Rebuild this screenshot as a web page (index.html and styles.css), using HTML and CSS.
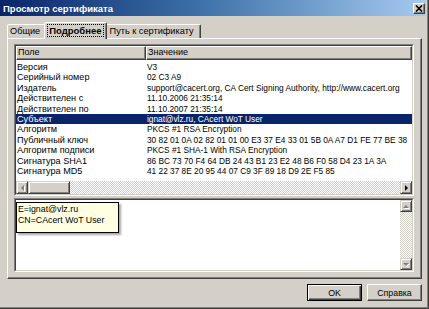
FILE: index.html
```html
<!DOCTYPE html>
<html lang="ru">
<head>
    <meta charset="UTF-8">
    <title>Просмотр сертификата</title>
    <link rel="stylesheet" href="styles.css">
</head>
<body>
    <div class="window">
        <!-- заголовок -->
        <div class="titlebar">
            <span class="title">Просмотр сертификата</span>
            <span class="close">
                <svg width="8" height="7" viewBox="0 0 8 7">
                    <path d="M1 0.5 L7 6.5 M7 0.5 L1 6.5" stroke="#000" stroke-width="1.6" fill="none"/>
                </svg>
            </span>
        </div>

        <div class="content">
            <!-- вкладки -->
            <div class="tabs">
                <div class="tab">Общие</div>
                <div class="tab active"><span class="focus">Подробнее</span></div>
                <div class="tab">Путь к сертификату</div>
            </div>

            <div class="panel">
                <!-- список полей -->
                <div class="sunken listview">
                    <div class="sunken-inner lv-inner">
                        <div class="lv-header">
                            <div class="hcell col1">Поле</div>
                            <div class="hcell col2">Значение</div>
                        </div>
                        <div class="lv-body">
                            <div class="row"><span class="c1">Версия</span><span class="c2">V3</span></div>
                            <div class="row"><span class="c1">Серийный номер</span><span class="c2">02 C3 A9</span></div>
                            <div class="row"><span class="c1">Издатель</span><span class="c2">support@cacert.org, CA Cert Signing Authority, http://www.cacert.org</span></div>
                            <div class="row"><span class="c1">Действителен с</span><span class="c2">11.10.2006 21:35:14</span></div>
                            <div class="row"><span class="c1">Действителен по</span><span class="c2">11.10.2007 21:35:14</span></div>
                            <div class="row selected"><span class="c1">Субъект</span><span class="c2">ignat@vlz.ru, CAcert WoT User</span></div>
                            <div class="row"><span class="c1">Алгоритм</span><span class="c2">PKCS #1 RSA Encryption</span></div>
                            <div class="row"><span class="c1">Публичный ключ</span><span class="c2">30 82 01 0A 02 82 01 01 00 E3 37 E4 33 01 5B 0A A7 D1 FE 77 BE 38</span></div>
                            <div class="row"><span class="c1">Алгоритм подписи</span><span class="c2">PKCS #1 SHA-1 With RSA Encryption</span></div>
                            <div class="row"><span class="c1">Сигнатура SHA1</span><span class="c2">86 BC 73 70 F4 64 DB 24 43 B1 23 E2 48 B6 F0 58 D4 23 1A 3A</span></div>
                            <div class="row"><span class="c1">Сигнатура MD5</span><span class="c2">41 22 37 8E 20 95 44 07 C9 3F 89 18 D9 2E F5 85</span></div>
                        </div>
                        <div class="hscroll">
                            <div class="sb-btn"><span class="arrow left disabled"></span></div>
                            <div class="sb-thumb"></div>
                            <div class="sb-track"></div>
                            <div class="sb-btn"><span class="arrow right"></span></div>
                        </div>
                    </div>
                </div>

                <!-- значение поля -->
                <div class="sunken details">
                    <div class="sunken-inner det-inner">
                        <div class="det-text"></div>
                        <div class="vscroll">
                            <div class="sb-btn"><span class="arrow up disabled"></span></div>
                            <div class="sb-track"></div>
                            <div class="sb-btn"><span class="arrow down disabled"></span></div>
                        </div>
                    </div>
                    <div class="tooltip">E=ignat@vlz.ru<br>CN=CAcert WoT User</div>
                </div>
            </div>

            <!-- кнопки -->
            <div class="buttons">
                <button class="btn default">OK</button>
                <button class="btn">Справка</button>
            </div>
        </div>
    </div>
</body>
</html>
```

FILE: styles.css
```css
/* базовые */
* {
    margin: 0;
    padding: 0;
    box-sizing: border-box;
}

body {
    background: #d4d0c8;
    font-family: "Liberation Sans", Arial, sans-serif;
    font-size: 8.5px;
    color: #000;
}

.window {
    width: 429px;
    height: 309px;
    background: #d4d0c8;
    border-right: 1px solid #404040;
    border-bottom: 1px solid #404040;
    box-shadow: inset -1px -1px 0 #808080;
    padding: 0 2px 2px 0;
    display: flex;
    flex-direction: column;
}

/* заголовок окна */
.titlebar {
    height: 16px;
    background: linear-gradient(to right, #0a246a 0%, #3a6ea5 45%, #a6caf0 100%);
    display: flex;
    align-items: center;
    justify-content: space-between;
    padding: 0 1px 0 3px;
}

.title {
    color: #fff;
    font-weight: bold;
    font-size: 9.5px;
}

.close {
    width: 12px;
    height: 11px;
    background: #d4d0c8;
    border: 1px solid;
    border-color: #fff #404040 #404040 #fff;
    box-shadow: inset -1px -1px 0 #808080;
    display: flex;
    align-items: center;
    justify-content: center;
}

.content {
    flex: 1;
    display: flex;
    flex-direction: column;
    padding: 6px 4px 0 7px;
}

/* вкладки */
.tabs {
    display: flex;
    align-items: flex-end;
    height: 16px;
}

.tab {
    height: 14px;
    padding: 0 5px 0 2px;
    font-size: 9.2px;
    line-height: 12px;
    background: #d4d0c8;
    border: 1px solid;
    border-bottom: none;
    border-color: #fff #404040 transparent #fff;
    border-radius: 2px 2px 0 0;
    box-shadow: inset -1px 0 0 #808080;
    white-space: nowrap;
}

.tab:last-child {
    padding: 0 6px 0 4px;
}

.tab.active {
    position: relative;
    z-index: 1;
    height: 17px;
    margin: 0 -2px -1px;
    padding: 1px 2px 0 2px;
    font-weight: bold;
    font-size: 9.5px;
}

.focus {
    border: 1px dotted #000;
    padding: 0 1px;
    line-height: 11px;
    display: inline-block;
}

.panel {
    height: 241px;
    background: #d4d0c8;
    border: 1px solid;
    border-color: #fff #404040 #404040 #fff;
    box-shadow: inset -1px -1px 0 #808080;
    padding: 5px 7px 0 6px;
    display: flex;
    flex-direction: column;
    gap: 2px;
}

/* утопленные рамки */
.sunken {
    border: 1px solid;
    border-color: #808080 #fff #fff #808080;
    background: #fff;
}

.sunken-inner {
    height: 100%;
    border: 1px solid;
    border-color: #404040 #d4d0c8 #d4d0c8 #404040;
}

.listview {
    height: 152px;
}

.lv-inner {
    display: flex;
    flex-direction: column;
    overflow: hidden;
}

.lv-header {
    display: flex;
    height: 14px;
    flex-shrink: 0;
}

.hcell {
    background: #d4d0c8;
    border: 1px solid;
    border-color: #fff #404040 #404040 #fff;
    box-shadow: inset -1px -1px 0 #808080;
    padding-left: 1px;
    line-height: 11px;
    font-size: 9px;
    white-space: nowrap;
}

.hcell.col1 {
    width: 130px;
}

.hcell.col2 {
    flex: 1;
}

.lv-body {
    flex: 1;
    padding-top: 2px;
    overflow: hidden;
}

.row {
    display: flex;
    height: 10.4px;
    line-height: 10.4px;
    white-space: nowrap;
    overflow: hidden;
}

.row .c1 {
    width: 130px;
    flex-shrink: 0;
    padding-left: 1px;
    font-size: 9.1px;
}

.row .c2 {
    padding-left: 1px;
    font-size: 8.3px;
}

.row.selected {
    background: #0a246a;
    color: #fff;
}

/* полосы прокрутки */
.hscroll {
    height: 13px;
    flex-shrink: 0;
    display: flex;
}

.sb-btn {
    width: 12px;
    height: 13px;
    flex-shrink: 0;
    background: #d4d0c8;
    border: 1px solid;
    border-color: #d4d0c8 #404040 #404040 #d4d0c8;
    box-shadow: inset 1px 1px 0 #fff, inset -1px -1px 0 #808080;
    display: flex;
    align-items: center;
    justify-content: center;
}

.sb-thumb {
    width: 42px;
    background: #d4d0c8;
    border: 1px solid;
    border-color: #d4d0c8 #404040 #404040 #d4d0c8;
    box-shadow: inset 1px 1px 0 #fff, inset -1px -1px 0 #808080;
}

.sb-track {
    flex: 1;
    background-color: #d4d0c8;
    background-image: repeating-conic-gradient(#fff 0 25%, #d4d0c8 0 50%);
    background-size: 2px 2px;
}

.arrow {
    width: 0;
    height: 0;
    border-style: solid;
}

.arrow.left {
    border-width: 3px 3px 3px 0;
    border-color: transparent #000 transparent transparent;
}

.arrow.right {
    border-width: 3px 0 3px 3px;
    border-color: transparent transparent transparent #000;
}

.arrow.up {
    border-width: 0 3px 3px 3px;
    border-color: transparent transparent #000 transparent;
}

.arrow.down {
    border-width: 3px 3px 0 3px;
    border-color: #000 transparent transparent transparent;
}

.arrow.disabled {
    filter: drop-shadow(1px 1px 0 #fff);
}

.arrow.left.disabled { border-right-color: #808080; }
.arrow.up.disabled { border-bottom-color: #808080; }
.arrow.down.disabled { border-top-color: #808080; }

/* поле значения */
.details {
    height: 74px;
    position: relative;
}

.det-inner {
    display: flex;
}

.det-text {
    flex: 1;
}

.vscroll {
    width: 12px;
    display: flex;
    flex-direction: column;
}

.vscroll .sb-btn {
    height: 12px;
}

.tooltip {
    position: absolute;
    left: 1px;
    top: 3px;
    width: 103px;
    height: 31px;
    background: #ffffe1;
    border: 1px solid #000;
    padding: 1px 1px;
    font-size: 8.8px;
    line-height: 11px;
    box-shadow: 2px 2px 2px rgba(0, 0, 0, 0.35);
    white-space: nowrap;
}

/* кнопки */
.buttons {
    display: flex;
    justify-content: flex-end;
    gap: 5px;
    margin-top: 5px;
}

.btn {
    width: 55px;
    height: 17px;
    font-family: "Liberation Sans", Arial, sans-serif;
    font-size: 8.8px;
    background: #d4d0c8;
    border: 1px solid;
    border-color: #fff #404040 #404040 #fff;
    box-shadow: inset -1px -1px 0 #808080;
}

.btn.default {
    border-color: #000;
    box-shadow: inset 1px 1px 0 #fff, inset -1px -1px 0 #404040, inset -2px -2px 0 #808080;
}
```
